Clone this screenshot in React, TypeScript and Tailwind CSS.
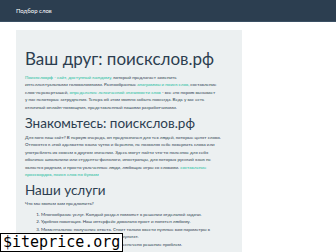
export default function App() {
  const link = "text-[#18bc9c]";
  return (
    <div className="relative w-[336px] h-[252px] overflow-hidden bg-white font-['Lato',sans-serif] text-[#2c3e50]">
      <nav className="h-[22px] bg-[#2c3e50] border-b border-[#3b5064] flex items-center px-4">
        <span className="text-[6px] text-white">Подбор слов</span>
      </nav>
      <div className="mt-2 ml-4 w-[226px] bg-[#ecf0f1] px-[9px] pt-[19px] pb-4">
        <h1 className="text-[17px] leading-[20px] mb-[5px]">Ваш друг: поискслов.рф</h1>
        <p className="text-[4.5px] leading-[7.4px] whitespace-nowrap">
          <a className={link}>Поисксловрф - сайт, доступный каждому,</a> который предлагает заменить
          <br />
          интеллектуальными головоломками. Разнообразные <a className={link}>анаграммы и поиск слов,</a> составление
          <br />
          слов-перевертышей, <a className={link}>определение лексической значимости слов</a> - все это порою вызывает
          <br />
          у нас некоторые затруднения. Теперь об этом можно забыть навсегда. Ведь у вас есть
          <br />
          отличный онлайн-помощник, представленный нашими разработчиками.
        </p>
        <h2 className="text-[13.5px] leading-[15px] mt-[5px] mb-[3px]">Знакомьтесь: поискслов.рф</h2>
        <p className="text-[4.5px] leading-[7.4px] whitespace-nowrap">
          Для кого наш сайт? В первую очередь, он предназначен для тех людей, которые ценят слово.
          <br />
          Относятся к этой адекватно языка чутко и бережно, не позволяя себе коверкать слова или
          <br />
          употреблять их совсем в другом значении. Здесь могут найти что-то полезное для себя
          <br />
          обычные школьники или студенты-филологи, иностранцы, для которых русский язык не
          <br />
          является родным, и просто увлеченные люди, любящие игры со словами. <a className={link}>составление</a>
          <br />
          <a className={link}>кроссвордов, поиск слов по буквам</a>
        </p>
        <h2 className="text-[13.5px] leading-[15px] mt-[5px] mb-[2px]">Наши услуги</h2>
        <p className="text-[4.5px] leading-[7.4px]">Что мы можем вам предложить?</p>
        <ol className="list-decimal pl-[16px] mt-[3px] text-[4.5px] leading-[7.4px] whitespace-nowrap">
          <li>Многообразие услуг. Каждый раздел поможет в решении отдельной задачи.</li>
          <li>Удобная навигация. Наш интерфейс довольно прост и понятен любому.</li>
          <li>
            Моментальное получение ответа. Стоит только ввести нужные вам параметры в
            <br />
            указанное поле, как система выдаст результат.
          </li>
          <li>Бесплатный доступ к сервису, и вам обеспечено решение проблем.</li>
        </ol>
      </div>
      <div className="absolute left-0 bottom-0 bg-white border border-black px-[2px] text-[15px] leading-[17px] font-['DejaVu_Sans_Mono',monospace] text-black">
        $iteprice.org
      </div>
    </div>
  );
}
